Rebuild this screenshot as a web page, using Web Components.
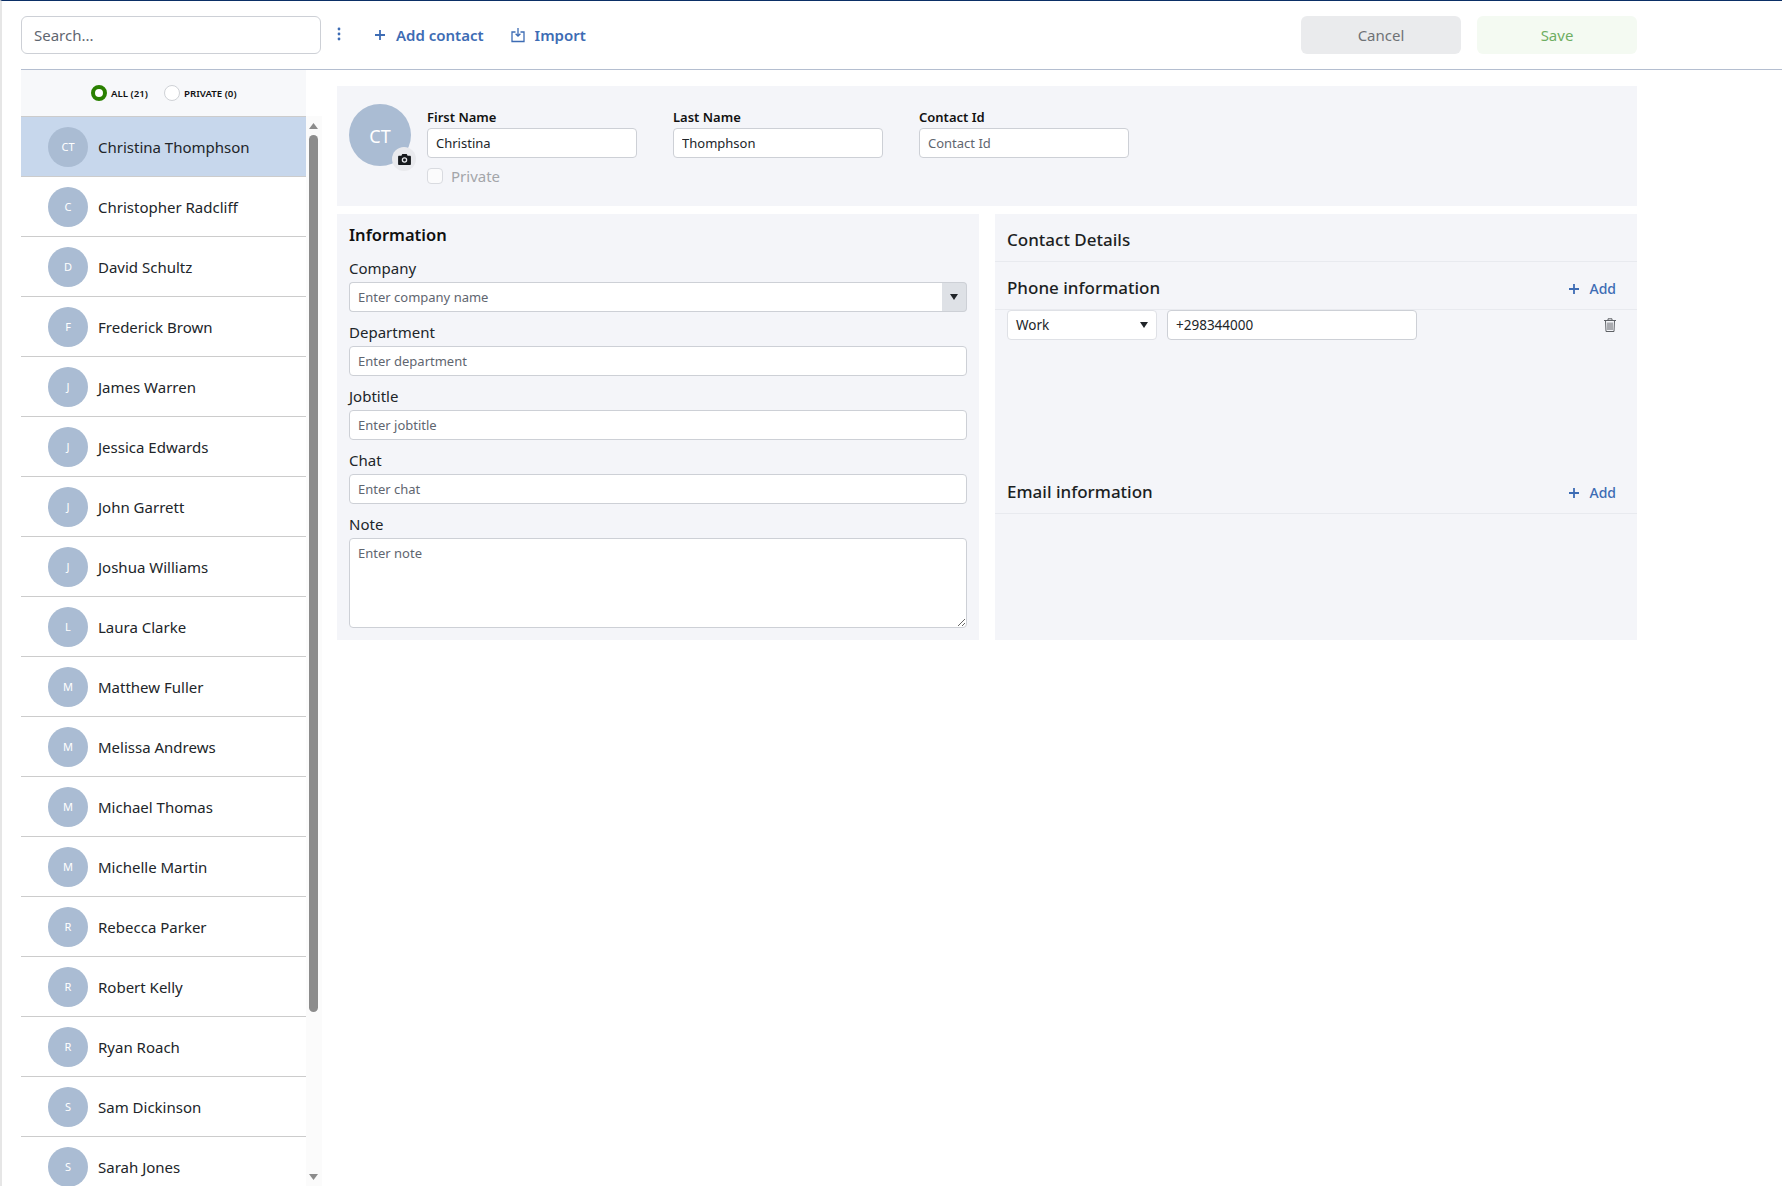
<!DOCTYPE html>
<html lang="en">
<head>
<meta charset="utf-8">
<title>Contacts</title>
<style>
    html, body { margin: 0; height: 100%; overflow: hidden; background: #fff; }
    body { font-family: "Noto Sans", "Open Sans", sans-serif; color: #212529; }
</style>
</head>
<body>
<contact-app></contact-app>

<script>
const FIELD_CSS = `
    input, textarea, select {
        box-sizing: border-box;
        width: 100%;
        height: 30px;
        margin: 0;
        padding: 0 8px;
        border: 1px solid #cdd0d6;
        border-radius: 4px;
        background: #fff;
        color: #212529;
        font: 13px "Noto Sans", sans-serif;
        outline: none;
    }
    ::placeholder { color: #5f6670; opacity: 1; }
`;

const PLUS_ICON = `<svg width="12" height="12" viewBox="0 0 12 12"><path d="M6 1v10M1 6h10" stroke="currentColor" stroke-width="1.8" fill="none"/></svg>`;

class AppToolbar extends HTMLElement {
    constructor() {
        super();
        this.shadow = this.attachShadow({ mode: "open" });
    }

    connectedCallback() {
        this.shadow.innerHTML = `
            <style>
                :host {
                    display: flex;
                    align-items: flex-start;
                    box-sizing: border-box;
                    height: 69px;
                    margin-left: 19px;
                    padding-top: 15px;
                    border-bottom: 1px solid #b4bed0;
                }
                ${FIELD_CSS}
                input {
                    width: 300px;
                    height: 38px;
                    padding: 0 12px;
                    font-size: 15px;
                    border-radius: 6px;
                }
                .kebab { display: flex; margin: 11px 0 0 16px; color: #3d6cb4; }
                .action {
                    display: flex;
                    align-items: center;
                    height: 38px;
                    gap: 10px;
                    color: #3d6cb4;
                    font-size: 15px;
                    font-weight: 600;
                }
                .add { margin-left: 33px; }
                .import { margin-left: 27px; }
                .buttons { display: flex; gap: 16px; margin-left: auto; margin-right: 145px; }
                .btn {
                    display: flex;
                    align-items: center;
                    justify-content: center;
                    width: 160px;
                    height: 38px;
                    border-radius: 6px;
                    font-size: 15px;
                }
                .cancel { background: #eaebed; color: #6f7276; }
                .save { background: #f4faf2; color: #6eae62; }
            </style>
            <input type="text" placeholder="Search...">
            <span class="kebab">
                <svg width="4" height="14" viewBox="0 0 4 14" fill="currentColor"><circle cx="2" cy="2" r="1.4"/><circle cx="2" cy="7" r="1.4"/><circle cx="2" cy="12" r="1.4"/></svg>
            </span>
            <span class="action add">${PLUS_ICON}Add contact</span>
            <span class="action import">
                <svg width="14" height="16" viewBox="0 0 14 16" fill="none" stroke="currentColor" stroke-width="1.3"><path d="M4.500 5H1v9.500h12V5H9.500"/><path d="M7 1v8M4.600 6.800 7 9.200l2.400-2.400"/></svg>
                Import
            </span>
            <div class="buttons">
                <span class="btn cancel">Cancel</span>
                <span class="btn save">Save</span>
            </div>
        `;
    }
}

class ContactRow extends HTMLElement {
    constructor() {
        super();
        this.shadow = this.attachShadow({ mode: "open" });
    }

    connectedCallback() {
        this.shadow.innerHTML = `
            <style>
                :host {
                    display: flex;
                    align-items: center;
                    box-sizing: border-box;
                    flex: none;
                    height: 60px;
                    padding-left: 27px;
                    border-bottom: 1px solid #cccccc;
                    color: #212529;
                    font-size: 15px;
                }
                :host([selected]) { background: #c7d7ec; }
                .avatar {
                    display: flex;
                    align-items: center;
                    justify-content: center;
                    width: 40px;
                    height: 40px;
                    margin-right: 10px;
                    border-radius: 50%;
                    background: #aabcd3;
                    color: #fff;
                    font-size: 11px;
                }
            </style>
            <span class="avatar">${this.getAttribute("initials")}</span>
            <slot></slot>
        `;
    }
}

class ContactSidebar extends HTMLElement {
    constructor() {
        super();
        this.shadow = this.attachShadow({ mode: "open" });
    }

    connectedCallback() {
        const contacts = [
            ["CT", "Christina Thomphson"], ["C", "Christopher Radcliff"], ["D", "David Schultz"],
            ["F", "Frederick Brown"], ["J", "James Warren"], ["J", "Jessica Edwards"],
            ["J", "John Garrett"], ["J", "Joshua Williams"], ["L", "Laura Clarke"],
            ["M", "Matthew Fuller"], ["M", "Melissa Andrews"], ["M", "Michael Thomas"],
            ["M", "Michelle Martin"], ["R", "Rebecca Parker"], ["R", "Robert Kelly"],
            ["R", "Ryan Roach"], ["S", "Sam Dickinson"], ["S", "Sarah Jones"]
        ];
        const rows = contacts.map((c, i) =>
            `<contact-row initials="${c[0]}" ${i === 0 ? "selected" : ""}>${c[1]}</contact-row>`
        ).join("");

        this.shadow.innerHTML = `
            <style>
                :host {
                    display: flex;
                    flex-direction: column;
                    flex: none;
                    width: 301px;
                    min-height: 0;
                }
                .filter {
                    display: flex;
                    align-items: center;
                    box-sizing: border-box;
                    width: 285px;
                    height: 46px;
                    padding-left: 70px;
                    background: #f7f8fa;
                    color: #111;
                    font-size: 9.7px;
                    font-weight: 600;
                }
                .radio {
                    box-sizing: border-box;
                    width: 16px;
                    height: 16px;
                    margin-right: 4px;
                    border: 1px solid #cfd2d6;
                    border-radius: 50%;
                    background: #fff;
                }
                .radio.on { border: 4px solid #2a8000; }
                .all { margin-right: 16px; }
                .body { display: flex; flex: 1; min-height: 0; }
                .list {
                    display: flex;
                    flex-direction: column;
                    width: 285px;
                    overflow: hidden;
                    border-top: 1px solid #cccccc;
                }
                .scroll {
                    display: flex;
                    flex-direction: column;
                    align-items: center;
                    box-sizing: border-box;
                    width: 16px;
                    padding: 7px 1px 0 0;
                    background: #fbfbfb;
                }
                .thumb {
                    width: 9px;
                    height: 877px;
                    margin-top: 6px;
                    border-radius: 4.5px;
                    background: #8c8c8c;
                }
                .down { margin-top: auto; margin-bottom: 6px; }
            </style>
            <div class="filter">
                <span class="radio on"></span><span class="all">ALL (21)</span>
                <span class="radio"></span><span>PRIVATE (0)</span>
            </div>
            <div class="body">
                <div class="list">${rows}</div>
                <div class="scroll">
                    <svg width="9" height="6" viewBox="0 0 9 6"><path d="M4.500 0 9 6H0z" fill="#8c8c8c"/></svg>
                    <div class="thumb"></div>
                    <svg class="down" width="9" height="6" viewBox="0 0 9 6"><path d="M0 0h9L4.500 6z" fill="#8c8c8c"/></svg>
                </div>
            </div>
        `;
    }
}

class NameField extends HTMLElement {
    constructor() {
        super();
        this.shadow = this.attachShadow({ mode: "open" });
    }

    connectedCallback() {
        const value = this.getAttribute("value") || "";
        const placeholder = this.getAttribute("placeholder") || "";
        this.shadow.innerHTML = `
            <style>
                :host { display: block; width: 210px; }
                ${FIELD_CSS}
                label {
                    display: block;
                    height: 22px;
                    padding-top: 1px;
                    box-sizing: border-box;
                    color: #111;
                    font-size: 13px;
                    font-weight: 600;
                    line-height: 20px;
                }
            </style>
            <label><slot></slot></label>
            <input type="text" value="${value}" placeholder="${placeholder}">
        `;
    }
}

class ContactHead extends HTMLElement {
    constructor() {
        super();
        this.shadow = this.attachShadow({ mode: "open" });
    }

    connectedCallback() {
        this.shadow.innerHTML = `
            <style>
                :host {
                    display: flex;
                    box-sizing: border-box;
                    height: 120px;
                    padding: 18px 12px 0;
                    background: #f4f5f9;
                }
                .avatar {
                    position: relative;
                    display: flex;
                    align-items: center;
                    justify-content: center;
                    flex: none;
                    box-sizing: border-box;
                    width: 62px;
                    height: 62px;
                    margin-right: 16px;
                    padding-top: 2px;
                    border-radius: 50%;
                    background: #aabcd3;
                    color: #fff;
                    font-size: 18px;
                }
                .camera {
                    position: absolute;
                    left: 43px;
                    top: 43px;
                    display: flex;
                    align-items: center;
                    justify-content: center;
                    width: 24px;
                    height: 24px;
                    border-radius: 50%;
                    background: #e9eaee;
                }
                .main { padding-top: 2px; }
                .fields { display: flex; gap: 36px; }
                .private {
                    display: flex;
                    align-items: center;
                    gap: 8px;
                    margin-top: 8px;
                    color: #a3a5a9;
                    font-size: 15px;
                }
                .check {
                    box-sizing: border-box;
                    width: 16px;
                    height: 16px;
                    border: 1px solid #d9dbe0;
                    border-radius: 4px;
                    background: #fbfbfc;
                }
            </style>
            <div class="avatar">CT
                <span class="camera">
                    <svg width="13" height="11" viewBox="0 0 14 12"><path fill="#16191d" fill-rule="evenodd" d="M4.600 0h4.800l1 1.800h2.400c.7 0 1.200.5 1.200 1.200v7.800c0 .7-.5 1.200-1.200 1.200H1.200C.5 12 0 11.500 0 10.800V3c0-.7.5-1.200 1.200-1.200h2.400zM7 3.600a3 3 0 1 0 0 6 3 3 0 0 0 0-6zm0 1.400a1.600 1.600 0 1 1 0 3.200 1.600 1.600 0 0 1 0-3.200z"/></svg>
                </span>
            </div>
            <div class="main">
                <div class="fields">
                    <name-field value="Christina">First Name</name-field>
                    <name-field value="Thomphson">Last Name</name-field>
                    <name-field placeholder="Contact Id">Contact Id</name-field>
                </div>
                <div class="private"><span class="check"></span>Private</div>
            </div>
        `;
    }
}

class InfoField extends HTMLElement {
    constructor() {
        super();
        this.shadow = this.attachShadow({ mode: "open" });
    }

    connectedCallback() {
        const placeholder = this.getAttribute("placeholder");
        let control = `<input type="text" placeholder="${placeholder}">`;
        if (this.hasAttribute("multiline")) {
            control = `<textarea placeholder="${placeholder}"></textarea>`;
        } else if (this.hasAttribute("combo")) {
            control = `<div class="combo">${control}<span class="arrow"><svg width="8" height="6" viewBox="0 0 8 6"><path d="M0 0h8L4 6z" fill="#212529"/></svg></span></div>`;
        }
        this.shadow.innerHTML = `
            <style>
                :host { display: block; margin-top: 8px; }
                ${FIELD_CSS}
                label {
                    display: block;
                    height: 26px;
                    color: #212529;
                    font-size: 15px;
                    line-height: 24px;
                }
                textarea { display: block; height: 90px; padding-top: 5px; }
                .combo { display: flex; }
                .combo input { flex: 1; min-width: 0; border-radius: 4px 0 0 4px; border-right: 0; }
                .arrow {
                    display: flex;
                    align-items: center;
                    justify-content: center;
                    flex: none;
                    box-sizing: border-box;
                    width: 25px;
                    height: 30px;
                    border: 1px solid #cdd0d6;
                    border-left: 0;
                    border-radius: 0 4px 4px 0;
                    background: #dee1e6;
                }
            </style>
            <label><slot></slot></label>
            ${control}
        `;
    }
}

class InfoPanel extends HTMLElement {
    constructor() {
        super();
        this.shadow = this.attachShadow({ mode: "open" });
    }

    connectedCallback() {
        this.shadow.innerHTML = `
            <style>
                :host {
                    display: block;
                    box-sizing: border-box;
                    height: 426px;
                    padding: 8px 12px 0;
                    background: #f4f5f9;
                }
                h2 {
                    margin: 0;
                    height: 26px;
                    color: #111;
                    font-size: 16.500px;
                    font-weight: 600;
                    line-height: 26px;
                }
            </style>
            <h2>Information</h2>
            <info-field combo placeholder="Enter company name">Company</info-field>
            <info-field placeholder="Enter department">Department</info-field>
            <info-field placeholder="Enter jobtitle">Jobtitle</info-field>
            <info-field placeholder="Enter chat">Chat</info-field>
            <info-field multiline placeholder="Enter note">Note</info-field>
        `;
    }
}

class SectionHead extends HTMLElement {
    constructor() {
        super();
        this.shadow = this.attachShadow({ mode: "open" });
    }

    connectedCallback() {
        const action = this.hasAttribute("action")
            ? `<span class="add">${PLUS_ICON}${this.getAttribute("action")}</span>` : "";
        this.shadow.innerHTML = `
            <style>
                :host {
                    display: flex;
                    align-items: center;
                    justify-content: space-between;
                    box-sizing: border-box;
                    height: 48px;
                    padding: 4px 21px 0 12px;
                    border-bottom: 1px solid #e8eaef;
                    color: #1c1f23;
                    font-size: 17px;
                    font-weight: 500;
                }
                .add {
                    display: flex;
                    align-items: center;
                    gap: 9px;
                    margin-top: 2px;
                    color: #3d6cb4;
                    font-size: 14px;
                }
            </style>
            <span><slot></slot></span>
            ${action}
        `;
    }
}

class PhoneRow extends HTMLElement {
    constructor() {
        super();
        this.shadow = this.attachShadow({ mode: "open" });
    }

    connectedCallback() {
        this.shadow.innerHTML = `
            <style>
                :host {
                    display: flex;
                    align-items: center;
                    box-sizing: border-box;
                    height: 30px;
                    padding: 0 21px 0 12px;
                }
                ${FIELD_CSS}
                .type {
                    position: relative;
                    display: flex;
                    align-items: center;
                    box-sizing: border-box;
                    width: 150px;
                    height: 30px;
                    padding-left: 8px;
                    border: 1px solid #dfe1e6;
                    border-radius: 4px;
                    background: #fff;
                    font-size: 13.500px;
                }
                .type svg { position: absolute; right: 8px; top: 11px; }
                input { width: 250px; margin-left: 10px; font-size: 13.500px; }
                .trash { display: flex; margin-left: auto; }
            </style>
            <span class="type">Work<svg width="8" height="6" viewBox="0 0 8 6"><path d="M0 0h8L4 6z" fill="#212529"/></svg></span>
            <input type="text" value="${this.getAttribute("number")}">
            <span class="trash">
                <svg width="12" height="14" viewBox="0 0 12 14" fill="none" stroke="#5e6166" stroke-width="1"><path d="M0 2.500h12M4 2.500V.8h4v1.700M1.500 2.500l.5 11h8l.5-11M4 4.500v7.500M6 4.500v7.500M8 4.500v7.500"/></svg>
            </span>
        `;
    }
}

class DetailsPanel extends HTMLElement {
    constructor() {
        super();
        this.shadow = this.attachShadow({ mode: "open" });
    }

    connectedCallback() {
        this.shadow.innerHTML = `
            <style>
                :host {
                    display: block;
                    box-sizing: border-box;
                    height: 426px;
                    background: #f4f5f9;
                }
                .phones { height: 156px; }
            </style>
            <section-head>Contact Details</section-head>
            <section-head action="Add">Phone information</section-head>
            <div class="phones"><phone-row number="+298344000"></phone-row></div>
            <section-head action="Add">Email information</section-head>
        `;
    }
}

class ContactApp extends HTMLElement {
    constructor() {
        super();
        this.shadow = this.attachShadow({ mode: "open" });
    }

    connectedCallback() {
        this.shadow.innerHTML = `
            <style>
                :host {
                    display: flex;
                    flex-direction: column;
                    box-sizing: border-box;
                    height: 100vh;
                    overflow: hidden;
                    border-top: 1px solid #0b2f66;
                    border-left: 2px solid #e6e6e6;
                }
                .body { display: flex; flex: 1; min-height: 0; padding-left: 19px; }
                main { width: 1300px; margin-left: 15px; padding-top: 16px; }
                .panels {
                    display: grid;
                    grid-template-columns: 642px 642px;
                    gap: 16px;
                    margin-top: 8px;
                }
            </style>
            <app-toolbar></app-toolbar>
            <div class="body">
                <contact-sidebar></contact-sidebar>
                <main>
                    <contact-head></contact-head>
                    <div class="panels">
                        <info-panel></info-panel>
                        <details-panel></details-panel>
                    </div>
                </main>
            </div>
        `;
    }
}

customElements.define("app-toolbar", AppToolbar);
customElements.define("contact-row", ContactRow);
customElements.define("contact-sidebar", ContactSidebar);
customElements.define("name-field", NameField);
customElements.define("contact-head", ContactHead);
customElements.define("info-field", InfoField);
customElements.define("info-panel", InfoPanel);
customElements.define("section-head", SectionHead);
customElements.define("phone-row", PhoneRow);
customElements.define("details-panel", DetailsPanel);
customElements.define("contact-app", ContactApp);
</script>
</body>
</html>
